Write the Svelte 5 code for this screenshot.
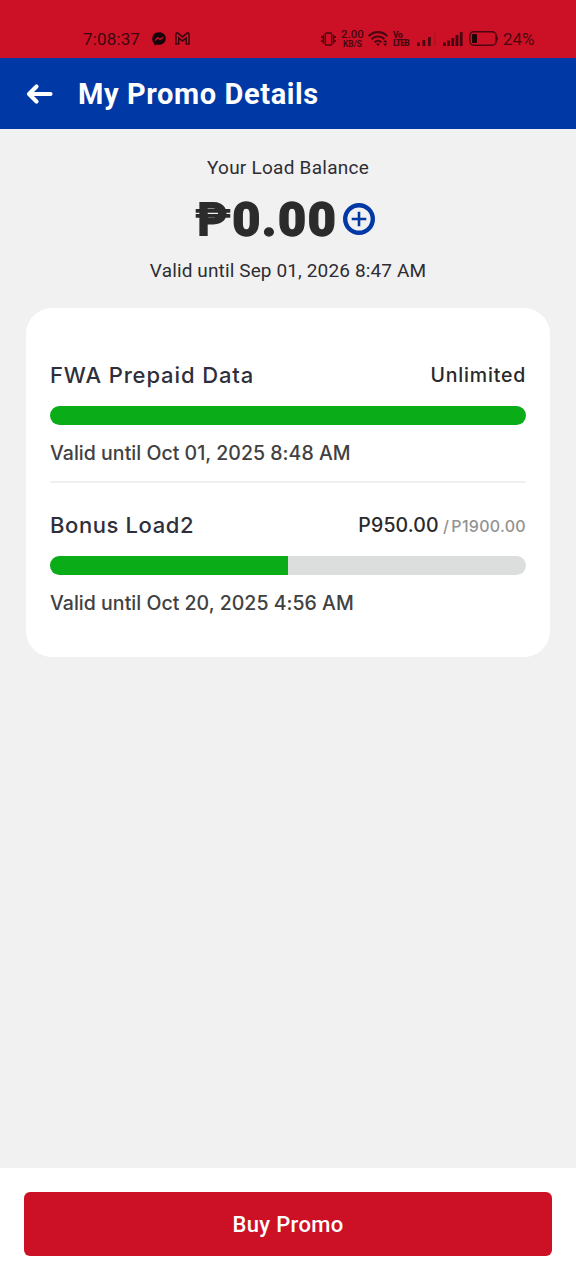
<script>
  const promos = [
    { name: 'FWA Prepaid Data', nameGap: 0.88, left: 'Unlimited', leftGap: 0.8, total: '', percent: 100, until: 'Valid until Oct 01, 2025 8:48 AM' },
    { name: 'Bonus Load2', nameGap: 0.6, left: 'P950.00', leftGap: 0.15, total: 'P1900.00', percent: 50, until: 'Valid until Oct 20, 2025 4:56 AM' }
  ];
</script>

<div class="screen">
  <div class="status">
    <span class="clock">7:08:37</span>
    <svg class="messenger" width="14" height="14" viewBox="0 0 14 14">
      <path d="M7 .2C3 .2.2 3 .2 6.700c0 2 .8 3.600 2.100 4.800V13.600l2.200-1.100c.8.2 1.600.3 2.500.3 4 0 6.800-2.700 6.800-6.300S11 .2 7 .2Z" fill="#17040a" />
      <path d="m3 8.500 2.700-2.800L8 7.400l3-2" fill="none" stroke="#cc1126" stroke-width="1.300" />
    </svg>
    <svg class="gmail" width="15" height="13" viewBox="0 0 16 13" preserveAspectRatio="none">
      <path d="M1 12V2.200C1 1 2.300.5 3.200 1.200L8 5l4.800-3.800c.9-.7 2.200-.2 2.200 1V12h-3V6L8 9 4 6v6Z" fill="none" stroke="#3c0610" stroke-width="1.600" />
    </svg>
    <span class="spacer"></span>
    <svg class="vibrate" width="15" height="14" viewBox="0 0 15 14" fill="none" stroke="#4a0711" stroke-width="1.400">
      <rect x="4.300" y="1" width="6.400" height="12" rx="1" />
      <path d="M2.300 3v8.500M12.700 3v8.500M.7 4v2M.7 8v2M14.300 4v2M14.300 8v2" />
    </svg>
    <span class="rate"><b>2.00</b><i>KB/S</i></span>
    <svg class="wifi" width="20" height="16" viewBox="0 0 20 16">
      <g fill="none" stroke="#4a0711" stroke-width="2.100">
        <path d="M.8 5.200C5.600-.2 14.400-.2 19.200 5.200" />
        <path d="M3.600 8.300c3.400-3.700 9.400-3.700 12.800 0" />
        <path d="M6.500 11.300c2-2.100 5-2.100 7 0" />
      </g>
      <path d="m10 15 2-2.200q-2-1.300-4 0ZM15 11.300l2.200-2.600 2.200 2.600ZM15 12.600h4.400l-2.200 2.600Z" fill="#4a0711" />
    </svg>
    <span class="volte"><b>Vo</b><b class="lte">LTEB</b></span>
    <svg class="signal" width="20" height="14" viewBox="0 0 20 14">
      <path d="M0 10.500h2.800V14H0ZM5.500 8h2.800v6H5.500ZM11 5h2.800v9H11Z" fill="#4a0711" />
      <path d="M17 1h1.500v13H17Z" fill="#b30f22" />
    </svg>
    <svg class="signal two" width="20" height="14" viewBox="0 0 20 14">
      <path d="M0 10.500h2.800V14H0ZM4.200 8.500H7V14H4.200ZM8.400 6h2.800v8H8.400ZM12.600 3h2.800v11h-2.800ZM16.800 0h2.800v14h-2.800Z" fill="#4a0711" />
    </svg>
    <svg class="battery" width="30" height="15" viewBox="0 0 30 15">
      <rect x=".8" y=".8" width="26.400" height="13.400" rx="4" fill="none" stroke="#4a0711" stroke-width="1.500" />
      <rect x="3" y="3" width="5" height="9" rx="1" fill="#1c0306" />
      <path d="M28 5q2 2.500 0 5Z" fill="#4a0711" />
    </svg>
    <span class="percent">24%</span>
  </div>

  <header>
    <svg class="back" width="28" height="22" viewBox="0 0 28 22" fill="none" stroke="#fff" stroke-width="4.200" stroke-linecap="round" stroke-linejoin="round">
      <path d="M24.500 11H4M10.500 3.500 3 11l7.500 7.500" />
    </svg>
    <h1>My Promo Details</h1>
  </header>

  <main>
    <section class="balance">
      <p class="label">Your Load Balance</p>
      <div class="amount">
        <strong><span class="peso">₱</span>0.00</strong>
        <svg width="32" height="32" viewBox="0 0 32 32" fill="none" stroke="#0038a5">
          <circle cx="16" cy="16" r="13.800" stroke-width="4.400" />
          <path d="M8.700 16h14.600M16 8.700v14.600" stroke-width="2.600" />
        </svg>
      </div>
      <p class="expiry">Valid until Sep 01, 2026 8:47 AM</p>
    </section>

    <section class="card">
      {#each promos as promo}
        <article>
          <div class="row">
            <h2 style="letter-spacing: {promo.nameGap}px">{promo.name}</h2>
            <div class="value">
              <span style="letter-spacing: {promo.leftGap}px">{promo.left}</span>
              {#if promo.total}<small>/ {promo.total}</small>{/if}
            </div>
          </div>
          <div class="track"><div class="fill" style="width: {promo.percent}%"></div></div>
          <p>{promo.until}</p>
        </article>
      {/each}
    </section>
  </main>

  <footer><button>Buy Promo</button></footer>
</div>

<style>
  :global(body) { background: #f1f1f1; }
  .screen { width: 576px; height: 1280px; display: flex; flex-direction: column; overflow: hidden; background: #f1f1f1; font-family: Roboto, sans-serif; color: #2d2d33; }
  p, h1, h2 { margin: 0; white-space: nowrap; }
  svg { display: block; flex: none; }
  .status { height: 58px; flex: none; box-sizing: border-box; padding: 19px 42px 0 83px; display: flex; align-items: center; background: #cc1126; color: #4a0711; white-space: nowrap; }
  .clock { width: 69px; font-size: 17px; letter-spacing: .15px; color: #3c0610; }
  .gmail { margin-left: 9px; }
  .spacer { flex: 1; }
  .rate { width: 23px; margin: 0 4px 0 5px; display: flex; flex-direction: column; align-items: center; }
  .rate b { font: 500 11.500px/10px Roboto, sans-serif; }
  .rate i { font: 700 8.500px/8px Roboto, sans-serif; margin-top: 1px; }
  .volte { width: 17px; margin: 0 7px 0 5px; display: flex; flex-direction: column; }
  .volte b { font: 900 8.500px/8px Roboto, sans-serif; letter-spacing: -.5px; }
  .volte .lte { letter-spacing: -.9px; }
  .two { margin-left: 6px; }
  .battery { margin: 0 4px 0 6px; }
  .percent { font-size: 17px; width: 31px; }
  header { height: 71px; flex: none; box-sizing: border-box; padding-left: 26px; display: flex; align-items: center; background: #0038a5; color: #fff; }
  h1 { margin-left: 24px; padding-top: 1px; font-size: 29px; line-height: 36px; font-weight: 700; letter-spacing: .6px; }
  main { flex: 1; }
  .balance { height: 179px; display: flex; flex-direction: column; align-items: center; }
  .label { margin-top: 27px; font-size: 19px; line-height: 24px; letter-spacing: .25px; }
  .amount { margin-top: 11px; height: 56px; padding-right: 6px; display: flex; align-items: center; gap: 6px; }
  strong { padding-top: 1px; font-size: 48.500px; line-height: 56px; font-weight: 900; letter-spacing: 1.500px; color: #2b2b2b; -webkit-text-stroke: 1.300px #2b2b2b; }
  .peso { letter-spacing: 1px; -webkit-text-stroke: 0; }
  .expiry { margin-top: 12px; font-size: 19px; line-height: 24px; letter-spacing: .13px; }
  .card { margin: 0 26px; height: 349px; box-sizing: border-box; padding: 30px 24px 0; border-radius: 26px; background: #fff; font-family: Inter, sans-serif; }
  article { height: 150px; box-sizing: border-box; padding-top: 22px; }
  article:first-child { height: 145px; border-bottom: 2px solid #f0f0f0; }
  article + article { padding-top: 27px; }
  .row { display: flex; justify-content: space-between; align-items: center; height: 30px; white-space: nowrap; }
  h2 { font-size: 22px; line-height: 30px; font-weight: 500; color: #2f2f3b; }
  .value { font-size: 19.500px; line-height: 28px; font-weight: 500; color: #292929; }
  small { margin-left: -1px; font-size: 16px; letter-spacing: .3px; word-spacing: -2.500px; color: #929292; }
  .track { height: 19px; margin-top: 16px; border-radius: 10px; background: #dcdedd; overflow: hidden; }
  .fill { height: 100%; background: #0aac18; }
  article p { margin-top: 15px; font-size: 19.500px; line-height: 26px; font-weight: 500; color: #414141; letter-spacing: .03px; }
  footer { height: 112px; flex: none; box-sizing: border-box; padding: 24px; background: #fff; }
  button { display: block; width: 100%; height: 64px; border: 0; border-radius: 6px; background: #cc1126; color: #fff; font: 500 22px/64px Roboto, sans-serif; letter-spacing: .35px; padding: 1px 0 0; }
</style>
